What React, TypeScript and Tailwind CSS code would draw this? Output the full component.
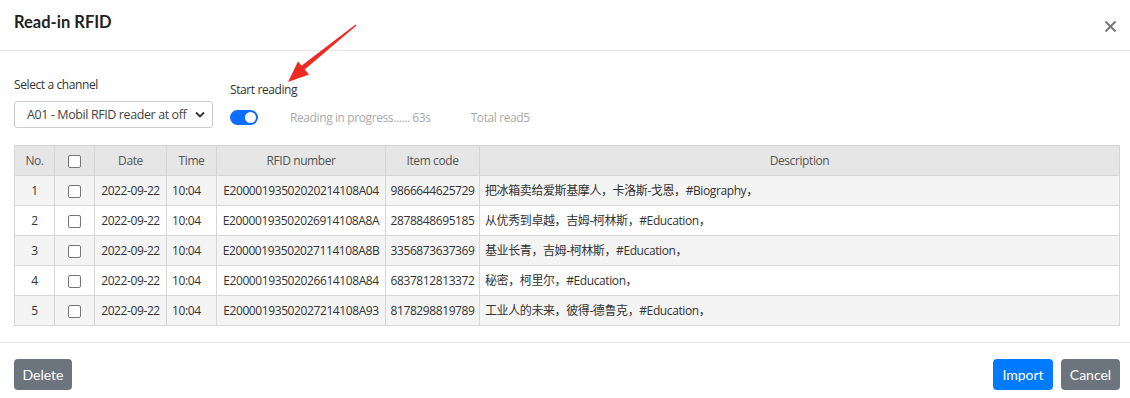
import React from 'react'

const rows = [
  { no: 1, rfid: 'E20000193502020214108A04', code: '9866644625729', desc: '把冰箱卖给爱斯基摩人，卡洛斯-戈恩，#Biography，' },
  { no: 2, rfid: 'E20000193502026914108A8A', code: '2878848695185', desc: '从优秀到卓越，吉姆-柯林斯，#Education，' },
  { no: 3, rfid: 'E20000193502027114108A8B', code: '3356873637369', desc: '基业长青，吉姆-柯林斯，#Education，' },
  { no: 4, rfid: 'E20000193502026614108A84', code: '6837812813372', desc: '秘密，柯里尔，#Education，' },
  { no: 5, rfid: 'E20000193502027214108A93', code: '8178298819789', desc: '工业人的未来，彼得-德鲁克，#Education，' },
]

function Box() {
  return <span className="inline-block w-[13px] h-[13px] border border-[#767676] rounded-[2px] bg-white align-middle" />
}

export default function App() {
  return (
    <div className="relative w-[1130px] h-[398px] bg-white text-[#333] font-['Open_Sans','Noto_Sans_CJK_SC',sans-serif] tracking-[-0.4px] overflow-hidden">
      {/* header */}
      <div className="h-[51px] border-b border-[#e5e5e5] flex items-center justify-between pl-[14px] pr-[13px]">
        <h1 className="font-['Lato',sans-serif] font-bold text-[16.5px] tracking-normal text-[#222] -mt-[5px]">Read-in RFID</h1>
        <svg width="13" height="13" viewBox="0 0 13 13" className="mt-[2px]">
          <path d="M1.5 1.5 L11.5 11.5 M11.5 1.5 L1.5 11.5" stroke="#777" strokeWidth="2" />
        </svg>
      </div>

      {/* body */}
      <div className="pl-[14px] pr-[10px] pt-[25px] pb-[16px] border-b border-[#e5e5e5]">
        <div className="flex items-end gap-[17px] text-[12px] leading-[18px]">
          <div className="flex flex-col gap-[7px]">
            <span>Select a channel</span>
            <div className="w-[199px] h-[27px] border border-[#ccc] rounded-[3px] flex items-center justify-between pl-[12px] pr-[7px] text-[12.5px] text-[#444] whitespace-nowrap">
              <span>A01 - Mobil RFID reader at off</span>
              <svg width="10" height="7" viewBox="0 0 10 7">
                <path d="M1 1.5 L5 5.5 L9 1.5" stroke="#333" strokeWidth="1.8" fill="none" />
              </svg>
            </div>
          </div>
          <div className="flex flex-col gap-[5px]">
            <span>Start reading</span>
            <div className="h-[24px] flex items-center">
              <span className="w-[28px] h-[15px] mt-[2px] rounded-full bg-[#0d6efd] flex items-center justify-end pr-[2px]">
                <span className="w-[11px] h-[11px] rounded-full bg-white" />
              </span>
              <span className="ml-[32px] mt-[4px] text-[#aaa]">Reading in progress...... 63s</span>
              <span className="ml-[40px] mt-[4px] text-[#aaa]">Total read5</span>
            </div>
          </div>
        </div>

        <table className="mt-[17px] w-full border-collapse text-[12px] table-fixed">
          <colgroup>
            <col className="w-[40px]" />
            <col className="w-[40px]" />
            <col className="w-[72px]" />
            <col className="w-[50px]" />
            <col className="w-[169px]" />
            <col className="w-[94px]" />
            <col />
          </colgroup>
          <thead>
            <tr className="h-[30px] bg-[#e6e6e6] text-[#555]">
              <th className="border border-[#d6d6d6] font-normal">No.</th>
              <th className="border border-[#d6d6d6] font-normal"><Box /></th>
              <th className="border border-[#d6d6d6] font-normal">Date</th>
              <th className="border border-[#d6d6d6] font-normal">Time</th>
              <th className="border border-[#d6d6d6] font-normal">RFID number</th>
              <th className="border border-[#d6d6d6] font-normal">Item code</th>
              <th className="border border-[#d6d6d6] font-normal">Description</th>
            </tr>
          </thead>
          <tbody>
            {rows.map((r) => (
              <tr key={r.no} className={`h-[30px] ${r.no % 2 === 1 ? 'bg-[#f4f4f4]' : 'bg-white'}`}>
                <td className="border border-[#d6d6d6] text-center">{r.no}</td>
                <td className="border border-[#d6d6d6] text-center"><Box /></td>
                <td className="border border-[#d6d6d6] text-center whitespace-nowrap">2022-09-22</td>
                <td className="border border-[#d6d6d6] pl-[5px]">10:04</td>
                <td className="border border-[#d6d6d6] text-center whitespace-nowrap">{r.rfid}</td>
                <td className="border border-[#d6d6d6] text-center">{r.code}</td>
                <td className="border border-[#d6d6d6] pl-[5px] whitespace-nowrap">{r.desc}</td>
              </tr>
            ))}
          </tbody>
        </table>
      </div>

      {/* footer */}
      <div className="flex items-center justify-between pl-[14px] pr-[10px] pt-[16px] font-['Lato',sans-serif] text-[14px] tracking-normal text-white">
        <button className="h-[31px] w-[58px] rounded-[4px] bg-[#6c757d]">Delete</button>
        <div className="flex gap-[8px]">
          <button className="h-[31px] w-[60px] rounded-[4px] bg-[#007bff]">Import</button>
          <button className="h-[31px] w-[59px] rounded-[4px] bg-[#6c757d]">Cancel</button>
        </div>
      </div>

      {/* annotation arrow */}
      <svg className="absolute left-0 top-0 pointer-events-none" width="1130" height="398">
        <polygon points="355.5,24.5 356.5,25.5 303.5,70.5 300.5,66.5" fill="#ef2a22" />
        <polygon points="288,82 298,61.5 309,74.5" fill="#ef2a22" />
      </svg>
    </div>
  )
}
